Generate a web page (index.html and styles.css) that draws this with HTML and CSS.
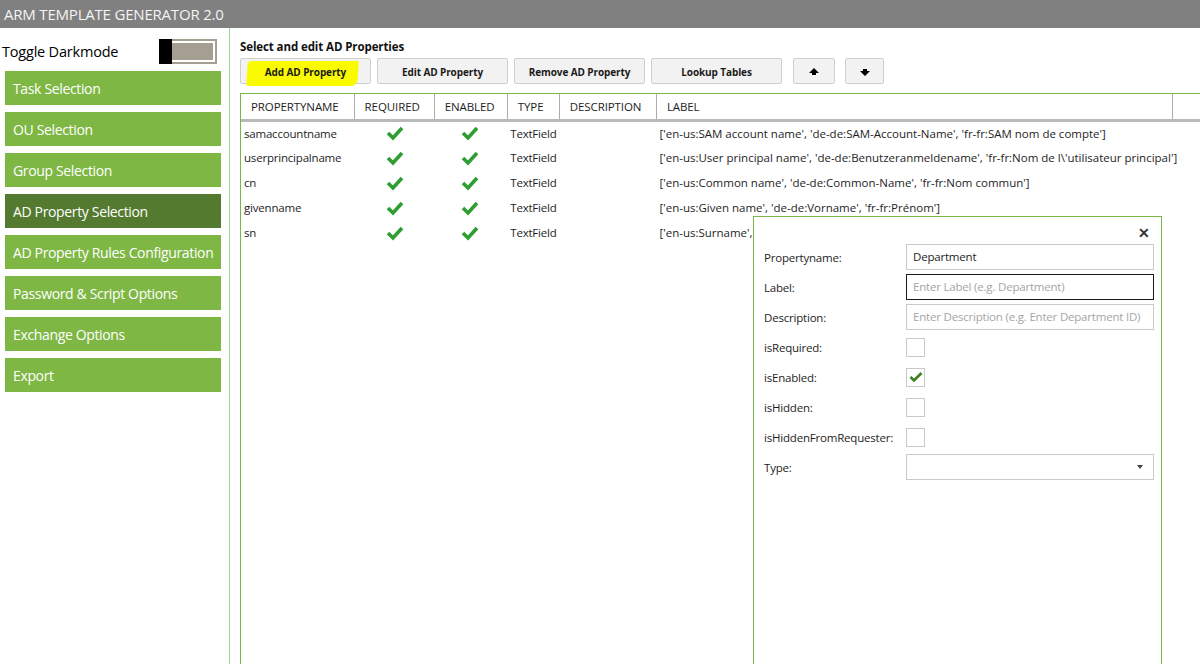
FILE: index.html
```html
<!DOCTYPE html>
<html>
<head>
<meta charset="utf-8">
<title>ARM Template Generator</title>
<link rel="stylesheet" href="styles.css">
</head>
<body>
<div class="titlebar">ARM TEMPLATE GENERATOR 2.0</div>
<div class="app">
  <aside class="sidebar">
    <div class="toggle-row">
      <span class="toggle-label">Toggle Darkmode</span>
      <span class="toggle"><span class="toggle-fill"></span><span class="thumb"></span></span>
    </div>
    <nav class="nav">
      <div class="nav-item">Task Selection</div>
      <div class="nav-item">OU Selection</div>
      <div class="nav-item">Group Selection</div>
      <div class="nav-item active">AD Property Selection</div>
      <div class="nav-item">AD Property Rules Configuration</div>
      <div class="nav-item">Password &amp; Script Options</div>
      <div class="nav-item">Exchange Options</div>
      <div class="nav-item">Export</div>
    </nav>
  </aside>
  <main class="main">
    <h1 class="heading">Select and edit AD Properties</h1>
    <div class="toolbar">
      <button class="btn highlighted"><span class="btn-text">Add AD Property</span></button>
      <button class="btn">Edit AD Property</button>
      <button class="btn">Remove AD Property</button>
      <button class="btn">Lookup Tables</button>
      <button class="btn btn-arrow up"><svg width="10" height="8" viewBox="0 0 10 8"><polygon points="5,0 10,5 7,5 7,7 3,7 3,5 0,5" fill="#000"/></svg></button>
      <button class="btn btn-arrow down"><svg width="10" height="8" viewBox="0 0 10 8"><polygon points="3,0 7,0 7,2 10,2 5,7 0,2 3,2" fill="#000"/></svg></button>
    </div>
    <div class="grid-wrap">
      <table class="grid">
        <colgroup>
          <col class="c1"><col class="c2"><col class="c3"><col class="c4"><col class="c5"><col class="c6"><col class="c7">
        </colgroup>
        <thead>
          <tr><th>PROPERTYNAME</th><th>REQUIRED</th><th>ENABLED</th><th>TYPE</th><th>DESCRIPTION</th><th>LABEL</th><th class="filler"></th></tr>
        </thead>
        <tbody>
          <tr><td>samaccountname</td><td class="chk"><svg class="tick" width="18" height="16" viewBox="0 0 18 16"><polyline points="2,8 7,13 16,3" fill="none" stroke="#2f9e32" stroke-width="3.6"/></svg></td><td class="chk"><svg class="tick" width="18" height="16" viewBox="0 0 18 16"><polyline points="2,8 7,13 16,3" fill="none" stroke="#2f9e32" stroke-width="3.6"/></svg></td><td>TextField</td><td></td><td class="lbl">['en-us:SAM account name', 'de-de:SAM-Account-Name', 'fr-fr:SAM nom de compte']</td><td></td></tr>
          <tr><td>userprincipalname</td><td class="chk"><svg class="tick" width="18" height="16" viewBox="0 0 18 16"><polyline points="2,8 7,13 16,3" fill="none" stroke="#2f9e32" stroke-width="3.6"/></svg></td><td class="chk"><svg class="tick" width="18" height="16" viewBox="0 0 18 16"><polyline points="2,8 7,13 16,3" fill="none" stroke="#2f9e32" stroke-width="3.6"/></svg></td><td>TextField</td><td></td><td class="lbl">['en-us:User principal name', 'de-de:Benutzeranmeldename', 'fr-fr:Nom de l\'utilisateur principal']</td><td></td></tr>
          <tr><td>cn</td><td class="chk"><svg class="tick" width="18" height="16" viewBox="0 0 18 16"><polyline points="2,8 7,13 16,3" fill="none" stroke="#2f9e32" stroke-width="3.6"/></svg></td><td class="chk"><svg class="tick" width="18" height="16" viewBox="0 0 18 16"><polyline points="2,8 7,13 16,3" fill="none" stroke="#2f9e32" stroke-width="3.6"/></svg></td><td>TextField</td><td></td><td class="lbl">['en-us:Common name', 'de-de:Common-Name', 'fr-fr:Nom commun']</td><td></td></tr>
          <tr><td>givenname</td><td class="chk"><svg class="tick" width="18" height="16" viewBox="0 0 18 16"><polyline points="2,8 7,13 16,3" fill="none" stroke="#2f9e32" stroke-width="3.6"/></svg></td><td class="chk"><svg class="tick" width="18" height="16" viewBox="0 0 18 16"><polyline points="2,8 7,13 16,3" fill="none" stroke="#2f9e32" stroke-width="3.6"/></svg></td><td>TextField</td><td></td><td class="lbl">['en-us:Given name', 'de-de:Vorname', 'fr-fr:Prénom']</td><td></td></tr>
          <tr><td>sn</td><td class="chk"><svg class="tick" width="18" height="16" viewBox="0 0 18 16"><polyline points="2,8 7,13 16,3" fill="none" stroke="#2f9e32" stroke-width="3.6"/></svg></td><td class="chk"><svg class="tick" width="18" height="16" viewBox="0 0 18 16"><polyline points="2,8 7,13 16,3" fill="none" stroke="#2f9e32" stroke-width="3.6"/></svg></td><td>TextField</td><td></td><td class="lbl">['en-us:Surname', 'de-de:Nachname', 'fr-fr:Nom de famille']</td><td></td></tr>
        </tbody>
      </table>
      <div class="dialog">
        <div class="dialog-head"><span class="close">✕</span></div>
        <div class="form">
          <div class="frow"><span class="flabel">Propertyname:</span><span class="input">Department</span></div>
          <div class="frow"><span class="flabel">Label:</span><span class="input focused placeholder">Enter Label (e.g. Department)</span></div>
          <div class="frow"><span class="flabel">Description:</span><span class="input placeholder">Enter Description (e.g. Enter Department ID)</span></div>
          <div class="frow"><span class="flabel">isRequired:</span><span class="cbox"></span></div>
          <div class="frow"><span class="flabel">isEnabled:</span><span class="cbox"><svg width="14" height="12" viewBox="0 0 14 12"><polyline points="1.5,6 5,9.5 12.5,2" fill="none" stroke="#3d7f1e" stroke-width="2.6"/></svg></span></div>
          <div class="frow"><span class="flabel">isHidden:</span><span class="cbox"></span></div>
          <div class="frow"><span class="flabel">isHiddenFromRequester:</span><span class="cbox"></span></div>
          <div class="frow"><span class="flabel">Type:</span><span class="input select"><span class="caret"></span></span></div>
        </div>
      </div>
    </div>
  </main>
</div>
</body>
</html>
```
FILE: styles.css
```css
* { box-sizing: border-box; }
html, body {
  margin: 0;
  padding: 0;
  width: 1200px;
  height: 664px;
  overflow: hidden;
  background: #ffffff;
  font-family: "Open Sans", "Noto Sans", sans-serif;
  color: #1e1e1e;
}
.titlebar {
  height: 28px;
  background: #808080;
  color: #f4f4f4;
  font-size: 15px;
  line-height: 28px;
  padding-left: 4px;
  letter-spacing: -0.2px;
}
.app {
  display: flex;
  height: 636px;
}
.sidebar {
  width: 230px;
  flex: none;
  border-right: 1px solid #97df93;
}
.toggle-row {
  height: 43px;
  display: flex;
  align-items: center;
  justify-content: space-between;
  padding: 0 12px 0 2px;
  padding-top: 4px;
}
.toggle-label {
  font-size: 14.5px;
  color: #000;
  letter-spacing: -0.2px;
}
.toggle {
  position: relative;
  display: block;
  width: 58px;
  height: 25px;
  border: 2px solid #a59e93;
  padding: 2px;
  background: #fff;
}
.toggle-fill {
  display: block;
  width: 100%;
  height: 100%;
  background: #a59e93;
}
.thumb {
  position: absolute;
  left: -2px;
  top: -2px;
  width: 13px;
  height: 25px;
  background: #000;
}
.nav {
  display: flex;
  flex-direction: column;
  gap: 7px;
  padding-left: 5px;
}
.nav-item {
  width: 216px;
  height: 34px;
  background: #7eb744;
  color: #fff;
  font-size: 14px;
  line-height: 36px;
  padding-left: 8px;
  letter-spacing: -0.35px;
  white-space: nowrap;
}
.nav-item.active {
  background: #537a2e;
}
.main {
  flex: 1;
  padding-left: 10px;
  position: relative;
}
.heading {
  margin: 0;
  padding-top: 11px;
  font-size: 11.5px;
  font-weight: bold;
  color: #111;
  line-height: 15px;
  letter-spacing: -0.1px;
}
.toolbar {
  display: flex;
  margin-top: 4px;
  height: 26px;
}
.btn {
  position: relative;
  width: 131px;
  height: 26px;
  margin-right: 6px;
  background: #f2f2f2;
  border: 1px solid #cfcfcf;
  border-radius: 2px;
  font-family: "Open Sans", "Noto Sans", sans-serif;
  font-size: 10px;
  font-weight: bold;
  color: #1a1a1a;
  padding: 2px 0 0 0;
  letter-spacing: -0.1px;
}
.btn.highlighted::before {
  content: "";
  position: absolute;
  left: 6px;
  top: 2px;
  width: 111px;
  height: 25px;
  background: #fbfb00;
  border-radius: 4px 2px 6px 3px;
  transform: skewX(-4deg);
}
.btn-text { position: relative; }
.btn-arrow {
  width: 42px;
  margin-left: 5px;
  margin-right: 4px;
  display: flex;
  align-items: center;
  justify-content: center;
}
.btn-arrow.down { width: 39px; margin-left: 6px; padding-top: 4px; }
.btn-arrow.up { padding-top: 1px; }
.grid-wrap {
  position: relative;
  margin-top: 9px;
  border-left: 1px solid #7ab648;
  border-top: 1px solid #7ab648;
  height: 572px;
}
.grid {
  border-collapse: collapse;
  table-layout: fixed;
  width: 960px;
  font-size: 11.5px;
}
.c1 { width: 113px; }
.c2 { width: 80px; }
.c3 { width: 73px; }
.c4 { width: 52px; }
.c5 { width: 97px; }
.c6 { width: 516px; }
.c7 { width: 28px; }
.grid th {
  height: 26px;
  text-align: left;
  font-weight: normal;
  font-size: 11.5px;
  color: #1e1e1e;
  padding: 0 0 0 10px;
  border-right: 1px solid #acacac;
  border-bottom: 3px solid #b9b9b9;
  white-space: nowrap;
  overflow: hidden;
  letter-spacing: -0.1px;
}
.grid th.filler { border-right: none; }
.grid td {
  height: 25px;
  padding: 0 0 0 3px;
  white-space: nowrap;
  overflow: visible;
  color: #1e1e1e;
  letter-spacing: -0.2px;
}
.grid td.lbl { letter-spacing: 0; }
.grid td.chk { padding: 0 0 0 32px; }
.grid td.chk + td.chk { padding-left: 27px; }
.tick { display: block; }
.dialog {
  position: absolute;
  left: 512px;
  top: 122px;
  width: 409px;
  height: 460px;
  background: #fff;
  border: 1px solid #7ab648;
  border-bottom: none;
  font-size: 11.5px;
}
.dialog-head {
  height: 27px;
  display: flex;
  justify-content: flex-end;
  align-items: center;
  padding-right: 11px;
}
.close {
  font-size: 14px;
  font-weight: bold;
  color: #333;
  line-height: 14px;
  padding-top: 4px;
}
.form {
  display: flex;
  flex-direction: column;
  gap: 4px;
  padding-left: 10px;
}
.frow {
  display: flex;
  align-items: center;
  height: 26px;
}
.flabel {
  width: 142px;
  flex: none;
  color: #1e1e1e;
  letter-spacing: -0.2px;
  white-space: nowrap;
}
.input {
  width: 248px;
  height: 26px;
  border: 1px solid #c9c9c9;
  padding-left: 6px;
  line-height: 24px;
  color: #1e1e1e;
  white-space: nowrap;
  overflow: hidden;
  letter-spacing: -0.2px;
}
.input.placeholder { color: #a5a5a5; }
.input.focused { border-color: #1a1a1a; }
.input.select { position: relative; }
.caret {
  position: absolute;
  right: 10px;
  top: 10px;
  width: 0;
  height: 0;
  border-left: 3.5px solid transparent;
  border-right: 3.5px solid transparent;
  border-top: 4px solid #444;
}
.cbox {
  width: 19px;
  height: 19px;
  border: 1px solid #c9c9c9;
  display: flex;
  align-items: center;
  justify-content: center;
}
```
